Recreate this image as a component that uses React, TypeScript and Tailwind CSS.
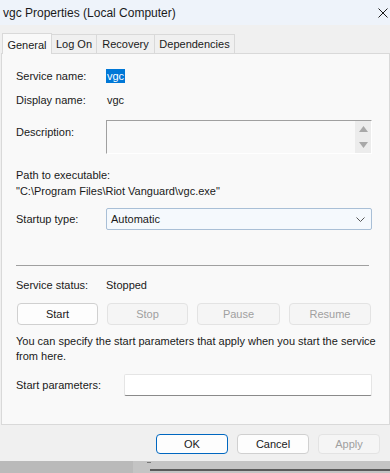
import React from "react";

const font = { fontFamily: '"Liberation Sans", Arial, sans-serif' };

function Btn({ label, w, disabled, primary }: { label: string; w: string; disabled?: boolean; primary?: boolean }) {
  const base = "flex items-center justify-center rounded-[4px] border text-[11px] ";
  const cls = disabled
    ? "bg-[#f5f5f5] border-[#e3e3e3] text-[#a0a0a0]"
    : primary
    ? "bg-[#fdfdfd] border-[#0067c0] text-[#1a1a1a]"
    : "bg-[#fdfdfd] border-[#d0d0d0] text-[#1a1a1a]";
  return <div className={base + cls + " " + w}>{label}</div>;
}

export default function App() {
  return (
    <div className="w-[390px] h-[473px] overflow-hidden flex flex-col bg-[#bdbdbd]" style={font}>
      <div className="w-[390px] h-[461px] bg-[#f0f0f0] flex flex-col text-[#1a1a1a]">
        {/* Title bar */}
        <div className="h-[25px] bg-[#eef3fa] flex items-center justify-between pl-[3px] pr-[2px] shrink-0">
          <span className="text-[12px] text-[#1a1a1a]">vgc Properties (Local Computer)</span>
          <svg width="10" height="10" viewBox="0 0 10 10" className="mt-[1px]">
            <path d="M0.5 0.5 L9.5 9.5 M9.5 0.5 L0.5 9.5" stroke="#1a1a1a" strokeWidth="1" />
          </svg>
        </div>
        {/* Tabs */}
        <div className="flex items-end pl-[2px] h-[28px] shrink-0 text-[11px]">
          <div className="relative z-10 -mb-px w-[50px] h-[21px] bg-[#f9f9f9] border border-b-0 border-[#d9d9d9] flex items-start justify-center pt-[3px]">
            General
          </div>
          <div className="w-[45px] h-[19px] bg-[#f0f0f0] border border-l-0 border-b-0 border-[#d9d9d9] flex items-center justify-center">
            Log On
          </div>
          <div className="w-[58px] h-[19px] bg-[#f0f0f0] border border-l-0 border-b-0 border-[#d9d9d9] flex items-center justify-center">
            Recovery
          </div>
          <div className="w-[80px] h-[19px] bg-[#f0f0f0] border border-l-0 border-b-0 border-[#d9d9d9] flex items-center justify-center">
            Dependencies
          </div>
        </div>
        {/* Panel */}
        <div className="ml-[1px] w-[389px] h-[372px] bg-[#f9f9f9] border border-[#d9d9d9] shrink-0 pl-[14px] flex flex-col text-[11px]">
          <div className="mt-[14px] h-[16px] flex items-center">
            <span className="w-[90px]">Service name:</span>
            <span className="bg-[#0078d7] text-white px-[1px] leading-[14px]">vgc</span>
          </div>
          <div className="mt-[8px] h-[16px] flex items-center">
            <span className="w-[90px]">Display name:</span>
            <span className="pl-[1px]">vgc</span>
          </div>
          <div className="mt-[12px] flex">
            <span className="w-[90px] pt-[4px]">Description:</span>
            <div className="w-[266px] h-[34px] flex border-t border-l border-[#a0a0a0] border-r border-r-white border-b border-b-white">
              <div className="flex-1" />
              <div className="w-[16px] bg-[#ececec] flex flex-col items-center justify-between py-[5px]">
                <svg width="9" height="6" viewBox="0 0 9 6"><path d="M0 6 L4.5 0 L9 6 Z" fill="#a8a8a8" /></svg>
                <svg width="9" height="6" viewBox="0 0 9 6"><path d="M0 0 L4.5 6 L9 0 Z" fill="#a8a8a8" /></svg>
              </div>
            </div>
          </div>
          <div className="mt-[13px] h-[16px] flex items-center">Path to executable:</div>
          <div className="h-[16px] flex items-center">"C:\Program Files\Riot Vanguard\vgc.exe"</div>
          <div className="mt-[9px] flex items-center">
            <span className="w-[90px]">Startup type:</span>
            <div className="w-[266px] h-[22px] bg-[#f5f9fd] border border-[#a9bfd6] rounded-[2px] flex items-center justify-between pl-[4px] pr-[6px]">
              <span>Automatic</span>
              <svg width="9" height="5" viewBox="0 0 9 5"><path d="M0.5 0.5 L4.5 4.5 L8.5 0.5" stroke="#555" strokeWidth="1" fill="none" /></svg>
            </div>
          </div>
          <div className="mt-[35px] w-[353px] h-px bg-[#a0a0a0]" />
          <div className="mt-[11px] h-[16px] flex items-center">
            <span className="w-[90px]">Service status:</span>
            <span>Stopped</span>
          </div>
          <div className="mt-[10px] h-[22px] flex ml-[1px] gap-[9px]">
            <Btn label="Start" w="w-[81px]" />
            <Btn label="Stop" w="w-[81px]" disabled />
            <Btn label="Pause" w="w-[83px]" disabled />
            <Btn label="Resume" w="w-[82px]" disabled />
          </div>
          <div className="mt-[9px] leading-[15px] w-[370px]">
            You can specify the start parameters that apply when you start the service from here.
          </div>
          <div className="mt-[10px] flex items-center">
            <span className="w-[108px]">Start parameters:</span>
            <div className="w-[248px] h-[22px] bg-white border border-[#e5e5e5] border-b-[#8a8a8a] rounded-[2px]" />
          </div>
        </div>
        {/* Bottom buttons */}
        <div className="flex mt-[9px] pl-[156px] gap-[9px] h-[20px] text-[11px]">
          <Btn label="OK" w="w-[72px]" primary />
          <Btn label="Cancel" w="w-[72px]" />
          <Btn label="Apply" w="w-[62px]" disabled />
        </div>
      </div>
      {/* Background strip below window */}
      <div className="flex h-[12px]">
        <div className="w-[133px] bg-[#bababa]" />
        <div className="flex-1 bg-[#c4c4c4] flex flex-col">
          <div className="h-[8px] pl-[14px]">
            <div className="mt-[1px] w-[4px] h-px bg-[#777]" />
          </div>
          <div className="ml-[17px] h-[2px] bg-[#5a5a5a]" />
        </div>
      </div>
    </div>
  );
}
